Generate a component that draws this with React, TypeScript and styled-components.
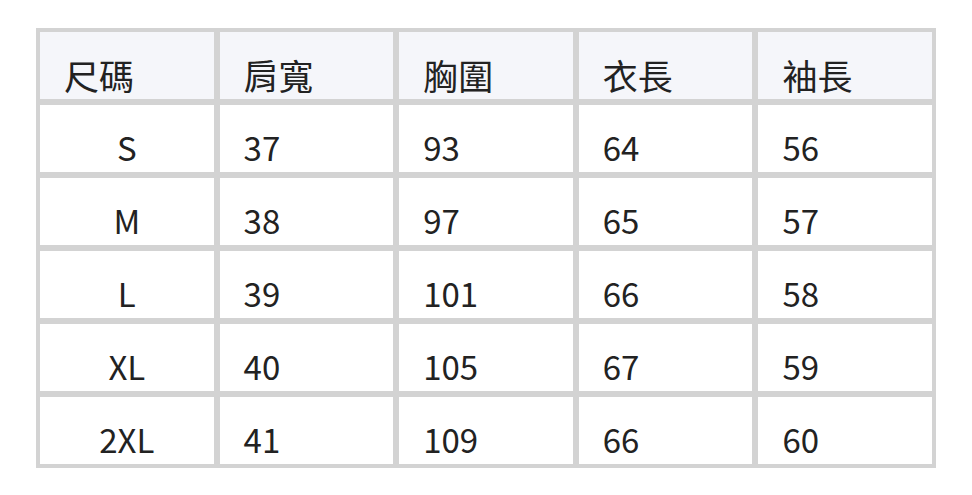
import React from "react";
import styled, { createGlobalStyle } from "styled-components";

const GlobalStyle = createGlobalStyle`
  html, body {
    margin: 0;
    padding: 0;
    background: #ffffff;
  }
  body {
    font-family: "Noto Sans CJK TC", "Noto Sans", sans-serif;
    color: #222222;
  }
`;

const Page = styled.div`
  padding: 28px 36px;
`;

const Table = styled.table`
  width: 900px;
  table-layout: fixed;
  border-collapse: separate;
  border-spacing: 0;
  border: 1px solid #d3d3d3;
  font-family: "Noto Sans CJK TC", "Noto Sans", sans-serif;
  font-size: 33px;
  color: #222222;
`;

const HeadCell = styled.th`
  border: 3px solid #d3d3d3;
  background: #f5f6fa;
  height: 66px;
  padding: 0 24px 1px;
  text-align: left;
  vertical-align: bottom;
  font-weight: 400;
  font-size: 35px;
  line-height: 46px;
`;

const Cell = styled.td<{ $center?: boolean }>`
  border: 3px solid #d3d3d3;
  background: #ffffff;
  height: 66px;
  padding: 0 24px 1px;
  text-align: ${(p) => (p.$center ? "center" : "left")};
  vertical-align: bottom;
  line-height: normal;
`;

const headers = ["尺碼", "肩寬", "胸圍", "衣長", "袖長"];

const rows: string[][] = [
  ["S", "37", "93", "64", "56"],
  ["M", "38", "97", "65", "57"],
  ["L", "39", "101", "66", "58"],
  ["XL", "40", "105", "67", "59"],
  ["2XL", "41", "109", "66", "60"],
];

export default function App() {
  return (
    <>
      <GlobalStyle />
      <Page>
        <Table>
          <thead>
            <tr>
              {headers.map((h) => (
                <HeadCell key={h}>{h}</HeadCell>
              ))}
            </tr>
          </thead>
          <tbody>
            {rows.map((r) => (
              <tr key={r[0]}>
                {r.map((v, i) => (
                  <Cell key={i} $center={i === 0}>
                    {v}
                  </Cell>
                ))}
              </tr>
            ))}
          </tbody>
        </Table>
      </Page>
    </>
  );
}
